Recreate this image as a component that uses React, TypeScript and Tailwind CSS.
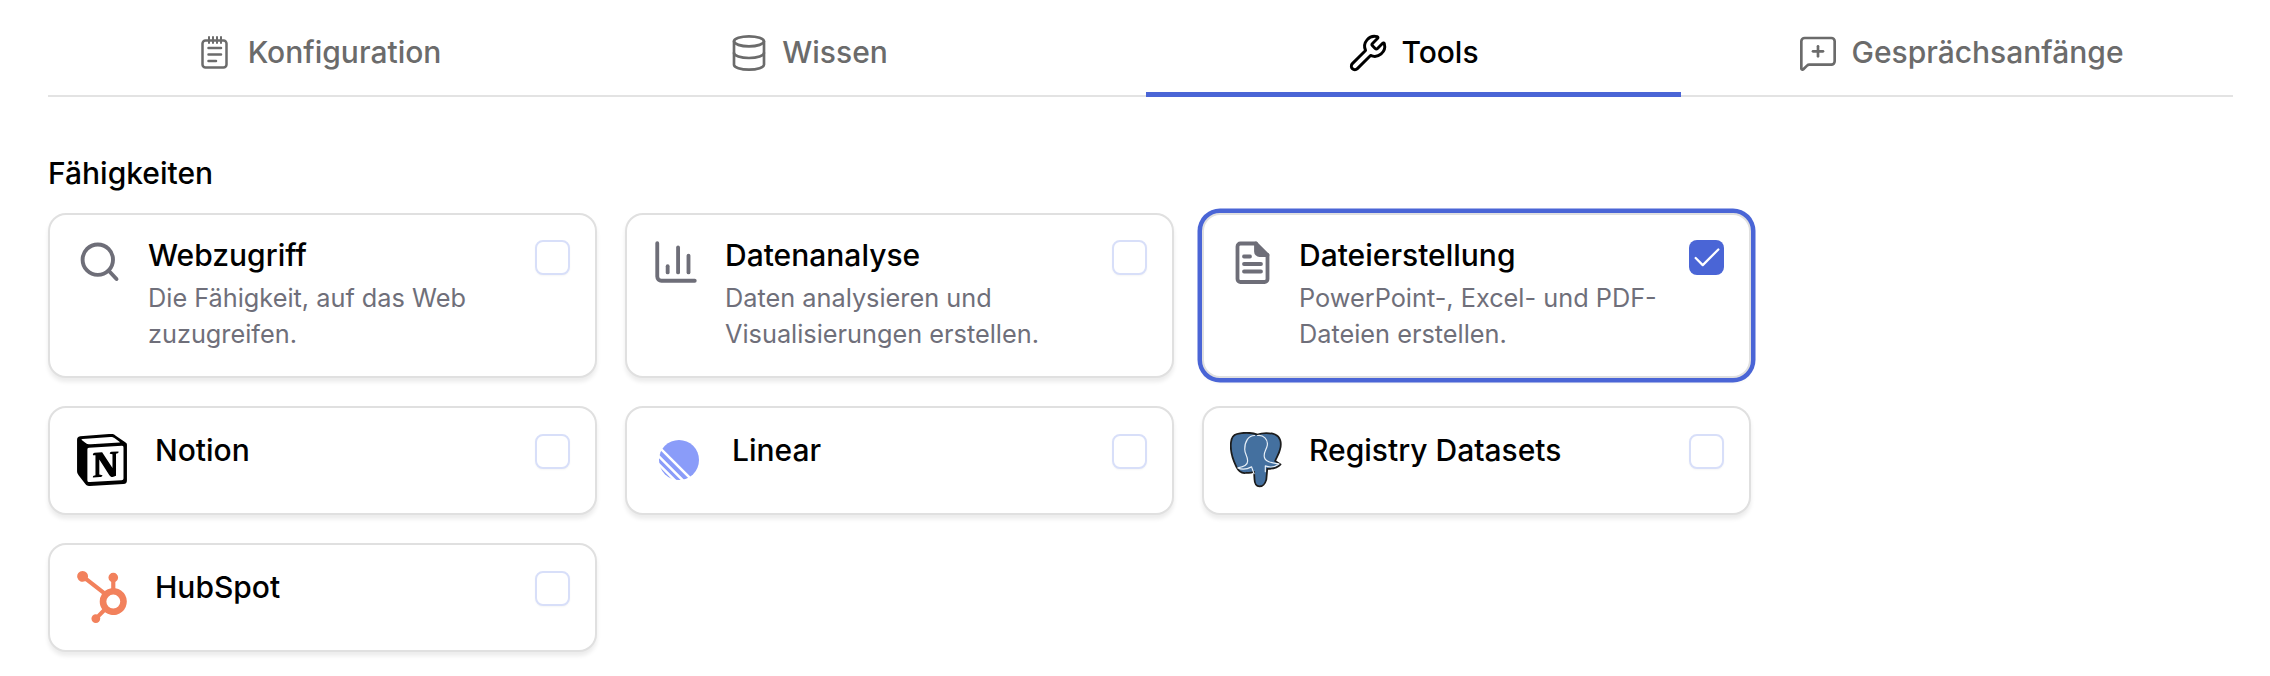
import type { ReactNode } from "react";
import { ChartColumn, Check, Database, MessageSquarePlus, Wrench } from "lucide-react";
import { SiHubspot, SiNotion } from "react-icons/si";

function NotepadIcon() {
  return (
    <svg
      viewBox="0 0 27 33"
      className="h-[33px] w-[27px]"
      fill="none"
      stroke="currentColor"
      strokeWidth="2.5"
      strokeLinecap="round"
    >
      <rect x="1.5" y="4.5" width="24" height="27" rx="3" />
      <path d="M8 1v6M12 1v6M16 1v6M20 1v6" strokeWidth="2" />
      <path d="M7.5 12H20M7.5 18.5H20M7.5 25H15" />
    </svg>
  );
}

function SearchIcon() {
  return (
    <svg viewBox="0 0 50 50" className="h-[50px] w-[50px]" fill="none" stroke="#6e6e78" strokeWidth="3.9" strokeLinecap="round">
      <circle cx="23.8" cy="22.7" r="15.2" />
      <path d="M35 34l7.5 8" />
    </svg>
  );
}

function FileIcon() {
  return (
    <svg viewBox="0 0 50 50" className="h-[50px] w-[50px]" fill="none" stroke="#6e6e78" strokeWidth="3.8" strokeLinecap="round" strokeLinejoin="round">
      <path d="M12.5 6.5h15.5l11.5 11.5v24a3 3 0 0 1-3 3h-24a3 3 0 0 1-3-3v-32.500a3 3 0 0 1 3-3z" />
      <path d="M28 6.500v8a3.500 3.500 0 0 0 3.500 3.500h8" fill="#6e6e78" />
      <path d="M16 19.500h6M16 27h17M16 34.500h17" />
    </svg>
  );
}

function LinearLogo() {
  return (
    <svg viewBox="0 0 40 40" className="h-[40px] w-[40px]">
      <circle cx="20" cy="20" r="20" fill="#8a9cf9" />
      <path d="M-2 5 34 41M-2 14.500 27 43.500M-2 22.500 20 44.500" stroke="#fff" strokeWidth="2.600" />
    </svg>
  );
}

function PostgresLogo() {
  return (
    <svg viewBox="0 0 53 56" className="h-[56px] w-[53px]">
      <path
        d="M7 1.500C13 0 22 0 28 2 33 0 41 0 46 2 51 4 53 10 51 17 50 22 47 26 46 29L51.500 32.500C49 35.500 43 37 38 37L37 48C36 52 33 55 30 55 27 55 25 52 25 48L24.500 40C22 41 19 41.500 17 41 13 42 9 40 6.500 35 3 28 0 18 1 10 1.500 5 3 2.500 7 1.500Z"
        fill="#44709f"
        stroke="#1c1c1c"
        strokeWidth="1.800"
        strokeLinejoin="round"
      />
      <path
        d="M25 3C19 3 15 9 15 17 15 22 18 24 18 29 18 33 14 35 8 36 12 38 18 37 22 35L24.500 42M28 3C34 2 39 7 38 13 37 18 34 20 35 25 35.500 29 40 31 50 32 46 35 41 36 36 34L36 40"
        fill="none"
        stroke="#e8f0f8"
        strokeWidth="1.200"
        strokeLinecap="round"
        strokeLinejoin="round"
      />
    </svg>
  );
}

type Item = {
  title: string;
  lines?: [string, string];
  icon: ReactNode;
  checked?: boolean;
};

const capabilities: Item[] = [
  {
    title: "Webzugriff",
    lines: ["Die Fähigkeit, auf das Web", "zuzugreifen."],
    icon: <SearchIcon />,
  },
  {
    title: "Datenanalyse",
    lines: ["Daten analysieren und", "Visualisierungen erstellen."],
    icon: <ChartColumn size={50} strokeWidth={1.85} className="text-[#6e6e78]" />,
  },
  {
    title: "Dateierstellung",
    lines: ["PowerPoint-, Excel- und PDF-", "Dateien erstellen."],
    icon: <FileIcon />,
    checked: true,
  },
];

const connectors: Item[] = [
  { title: "Notion", icon: <SiNotion size={52} color="#000" /> },
  { title: "Linear", icon: <LinearLogo /> },
  { title: "Registry Datasets", icon: <PostgresLogo /> },
  { title: "HubSpot", icon: <SiHubspot size={52} color="#f2815c" /> },
];

function Checkbox({ checked }: { checked?: boolean }) {
  if (checked) {
    return (
      <div className="flex h-[35px] w-[35px] shrink-0 items-center justify-center rounded-[8px] bg-[#4a65d6]">
        <Check size={34} strokeWidth={1.6} className="text-white" />
      </div>
    );
  }
  return (
    <div className="h-[35px] w-[35px] shrink-0 rounded-[8px] border-2 border-[#d8dff9] bg-white shadow-[0_1px_2px_rgba(0,0,0,0.04)]" />
  );
}

function CapabilityCard({ item }: { item: Item }) {
  return (
    <div
      className={`flex h-[165px] items-start rounded-[18px] border-2 border-[#e0e0e0] bg-white pl-[24px] pr-[25px] pt-[22px] shadow-[0_4px_4px_rgba(0,0,0,0.08)] ${
        item.checked ? "ring-[4.5px] ring-[#4a65d6]" : ""
      }`}
    >
      <div className={`h-[50px] w-[50px] shrink-0 ${item.checked ? "mr-[21px]" : "mr-[24px]"}`}>
        {item.icon}
      </div>
      <div className="min-w-0 flex-1">
        <div className="text-[30px] font-[450] leading-[36px] text-black">
          {item.title}
        </div>
        <div className="mt-[7px] text-[25.3px] leading-[36px] text-[#6f6f7a]">
          {item.lines?.map((line) => <div key={line}>{line}</div>)}
        </div>
      </div>
      <div className="mt-[3px]">
        <Checkbox checked={item.checked} />
      </div>
    </div>
  );
}

function ConnectorCard({ item }: { item: Item }) {
  return (
    <div className="flex h-[109px] items-start rounded-[18px] border-2 border-[#e0e0e0] bg-white pl-[26px] pr-[25px] pt-[24px] shadow-[0_4px_4px_rgba(0,0,0,0.08)]">
      <div className="mr-[27px] flex h-[55px] w-[52px] shrink-0 items-center justify-center">
        {item.icon}
      </div>
      <div className="min-w-0 flex-1 text-[30px] font-[450] leading-[36px] text-black">
        {item.title}
      </div>
      <div className="mt-[2px]">
        <Checkbox />
      </div>
    </div>
  );
}

export default function App() {
  return (
    <div className="h-[676px] w-[2270px] overflow-hidden bg-white pl-[48px] font-['Inter',sans-serif]">
      {/* Tabs */}
      <div className="grid h-[97px] w-[2185px] grid-cols-[541px_557px_535px_1fr] border-b-2 border-[#e3e3e3] text-[30px] font-[450]">
        <div className="flex h-[97px] items-center justify-center gap-[20px] pl-[5px] pt-[8px] text-[#6b6b6b]">
          <NotepadIcon />
          <span>Konfiguration</span>
        </div>
        <div className="flex h-[97px] items-center justify-center gap-[13px] pr-[118px] pt-[8px] text-[#6b6b6b]">
          <Database size={40} strokeWidth={1.6} />
          <span>Wissen</span>
        </div>
        <div className="flex h-[97px] items-center justify-center gap-[13px] border-b-[5px] border-[#4a65d6] pt-[13px] text-black">
          <Wrench size={40} strokeWidth={1.75} />
          <span>Tools</span>
        </div>
        <div className="flex h-[97px] items-center justify-center gap-[13px] pl-[8px] pt-[8px] text-[#6b6b6b]">
          <MessageSquarePlus size={40} strokeWidth={1.6} />
          <span>Gesprächsanfänge</span>
        </div>
      </div>

      <h2 className="mt-[58px] mb-[22px] text-[30px] font-[450] leading-[36px] text-black">
        Fähigkeiten
      </h2>

      <div className="grid w-[1703px] grid-cols-3 gap-x-[28px] gap-y-[28px]">
        {capabilities.map((item) => (
          <CapabilityCard key={item.title} item={item} />
        ))}
        {connectors.map((item) => (
          <ConnectorCard key={item.title} item={item} />
        ))}
      </div>
    </div>
  );
}
